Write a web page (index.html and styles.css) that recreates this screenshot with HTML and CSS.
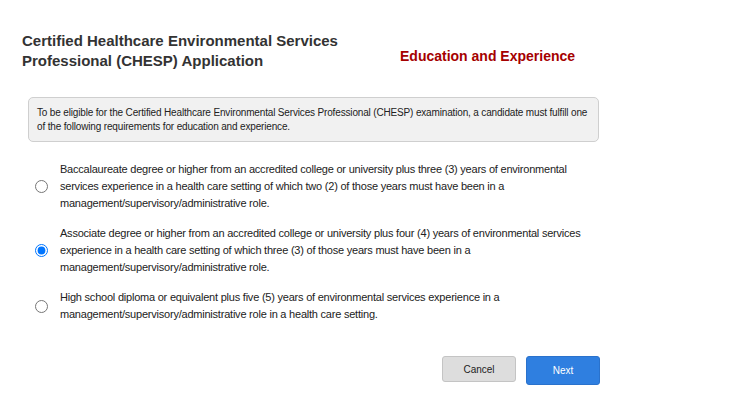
FILE: index.html
```html
<!DOCTYPE html>
<html lang="en">
<head>
    <meta charset="UTF-8">
    <meta name="viewport" content="width=device-width, initial-scale=1.0">
    <title>CHESP Application</title>
    <link rel="stylesheet" href="styles.css">
</head>
<body>

    <div class="page">
        <div class="header">
            <h1 class="app-title">Certified Healthcare Environmental Services Professional (CHESP) Application</h1>
            <h2 class="step-title">Education and Experience</h2>
        </div>

        <div class="notice">
            To be eligible for the Certified Healthcare Environmental Services Professional (CHESP) examination, a candidate must fulfill one of the following requirements for education and experience.
        </div>

        <div class="options">
            <label class="option">
                <input type="radio" name="requirement" value="1">
                <span>Baccalaureate degree or higher from an accredited college or university plus three (3) years of environmental services experience in a health care setting of which two (2) of those years must have been in a management/supervisory/administrative role.</span>
            </label>
            <label class="option">
                <input type="radio" name="requirement" value="2" checked>
                <span>Associate degree or higher from an accredited college or university plus four (4) years of environmental services experience in a health care setting of which three (3) of those years must have been in a management/supervisory/administrative role.</span>
            </label>
            <label class="option">
                <input type="radio" name="requirement" value="3">
                <span>High school diploma or equivalent plus five (5) years of environmental services experience in a management/supervisory/administrative role in a health care setting.</span>
            </label>
        </div>

        <div class="actions">
            <button class="btn btn-cancel">Cancel</button>
            <button class="btn btn-next">Next</button>
        </div>
    </div>

</body>
</html>
```

FILE: styles.css
```css
body {
    margin: 0;
    font-family: 'Liberation Sans', Arial, sans-serif;
    background-color: #ffffff;
    color: #222;
}

.page {
    width: 580px;
    padding: 31px 0 0 22px;
}

.header {
    display: flex;
    align-items: center;
}

.app-title {
    width: 340px;
    margin: 0;
    font-size: 15px;
    line-height: 20px;
    font-weight: bold;
    color: #333;
}

.step-title {
    margin: 10px 0 0 38px;
    font-size: 14px;
    font-weight: bold;
    color: #a50000;
}

.notice {
    margin: 26px 0 0 6px;
    padding: 8px 8px 7px 8px;
    width: 553px;
    background-color: #f1f1f1;
    border: 1px solid #cfcfcf;
    border-radius: 5px;
    font-size: 10px;
    line-height: 14px;
    letter-spacing: -0.16px;
    color: #222;
}

.options {
    margin-top: 19px;
    display: flex;
    flex-direction: column;
    gap: 13px;
}

.option {
    display: flex;
    align-items: center;
    font-size: 11px;
    line-height: 17px;
    letter-spacing: -0.22px;
    color: #222;
}

.option input {
    margin: 0 12px 0 13px;
    width: 13px;
    height: 13px;
    flex-shrink: 0;
}

.option span {
    width: 527px;
}

.actions {
    display: flex;
    justify-content: flex-end;
    gap: 10px;
    margin-top: 33px;
    padding-right: 2px;
}

.btn {
    width: 74px;
    font-family: 'Liberation Sans', Arial, sans-serif;
    font-size: 10px;
    border-radius: 3px;
    cursor: pointer;
}

.btn-cancel {
    height: 26px;
    background-color: #dddddd;
    border: 1px solid #c4c4c4;
    color: #222;
}

.btn-next {
    height: 29px;
    background-color: #2f7fe0;
    border: 1px solid #2a72cc;
    color: #fff;
}
```
